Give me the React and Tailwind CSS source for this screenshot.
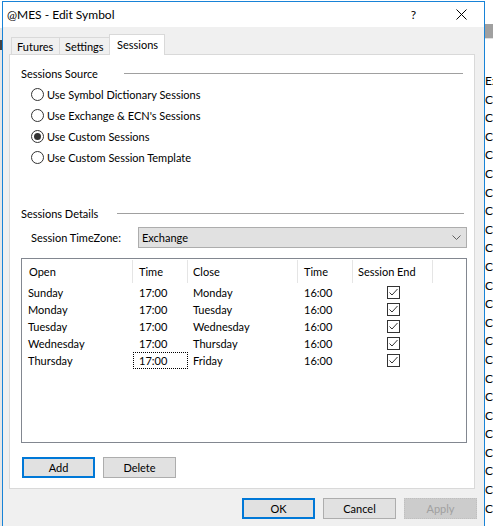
const font = { fontFamily: 'Lato, "Liberation Sans", sans-serif' };

const sideRows = ['Ex', 'CM', 'CM', 'CM', 'CM', 'CM', 'CM', 'CE', 'CL', 'CM', 'CM', 'CM', 'CO', 'CM', 'CM', 'CE', 'CM', 'CM', 'CM', 'CM', 'CL', 'CE', 'CE', 'CL'];

const sessions = [
  ['Sunday', '17:00', 'Monday', '16:00'],
  ['Monday', '17:00', 'Tuesday', '16:00'],
  ['Tuesday', '17:00', 'Wednesday', '16:00'],
  ['Wednesday', '17:00', 'Thursday', '16:00'],
  ['Thursday', '17:00', 'Friday', '16:00'],
];

const sources = [
  ['Use Symbol Dictionary Sessions', false],
  ["Use Exchange & ECN's Sessions", false],
  ['Use Custom Sessions', true],
  ['Use Custom Session Template', false],
];

function Radio({ checked, label }) {
  return (
    <div className="flex h-[21px] items-center pl-[21px]">
      <div className="flex h-[13px] w-[13px] items-center justify-center rounded-full border border-[#333333] bg-white">
        {checked && <div className="h-[7px] w-[7px] rounded-full bg-[#333333]" />}
      </div>
      <span className="ml-[3px]">{label}</span>
    </div>
  );
}

function Check() {
  return (
    <div className="ml-[34px] h-[13px] w-[13px] border border-[#333333] bg-white">
      <svg width="11" height="11" viewBox="0 0 11 11">
        <polyline points="1.5,5.5 4,8 9.5,2" fill="none" stroke="#333333" strokeWidth="1" />
      </svg>
    </div>
  );
}

function Button({ children, focused, disabled }) {
  return (
    <div
      className={
        'flex h-[21px] w-[73px] items-center justify-center ' +
        (focused
          ? 'border-2 border-[#0078d7] bg-[#e1e1e1]'
          : disabled
          ? 'border border-dotted border-[#bfbfbf] bg-[#cccccc] text-[#a0a0a0]'
          : 'border border-[#adadad] bg-[#e1e1e1]')
      }
    >
      {children}
    </div>
  );
}

function GroupTitle({ title, width, mr }) {
  return (
    <div className="flex h-[15px] items-center">
      <div className="pl-[11px]" style={{ width }}>{title}</div>
      <div className="h-px flex-1 bg-[#a0a0a0]" style={{ marginRight: mr }} />
    </div>
  );
}

export default function App() {
  return (
    <div className="flex h-[526px] w-[493px] overflow-hidden bg-white text-[11px] leading-[15px] text-black" style={font}>
      <div className="flex w-[2px] flex-col">
        <div className="h-[28px] bg-white" />
        <div className="h-[12px] bg-[#e6e6e6]" />
        <div className="h-[10px] bg-[#444444]" />
        <div className="flex-1 bg-[#e6e6e6]" />
      </div>

      <div className="mt-px flex w-[483px] flex-col border border-b-0 border-[#1883d7] bg-[#f0f0f0]">
        <div className="flex h-[25px] items-center bg-white pl-[4px] text-[12px]">
          <span>@MES - Edit Symbol</span>
          <span className="ml-auto mr-[40px] text-[12px]">?</span>
          <svg width="11" height="11" viewBox="0 0 11 11" className="mr-[17px]">
            <path d="M0.5 0.5 L10.5 10.5 M10.5 0.5 L0.5 10.5" stroke="#000" strokeWidth="1" />
          </svg>
        </div>

        <div className="ml-[8px] mt-[7px] flex h-[20px] items-end">
          <div className="flex h-[17px] w-[48px] items-center border-l border-t border-[#d9d9d9] pl-[5px]">Futures</div>
          <div className="flex h-[17px] w-[50px] items-center border-l border-t border-[#d9d9d9] pl-[5px]">Settings</div>
          <div className="relative z-10 -mb-px flex h-[21px] w-[56px] items-start border-l border-r border-t border-[#d9d9d9] bg-white pl-[7px] pt-[2px]">Sessions</div>
        </div>

        <div className="ml-[6px] flex h-[435px] w-[466px] flex-col border border-[#d9d9d9] bg-white pt-[11px]">
          <GroupTitle title="Sessions Source" width={114} mr={11} />
          <div className="mt-[3px]">
            {sources.map(([label, checked]) => (
              <Radio key={label} label={label} checked={checked} />
            ))}
          </div>

          <div className="mt-[38px]">
            <GroupTitle title="Sessions Details" width={107} mr={10} />
          </div>

          <div className="mt-[6px] flex h-[21px] items-center">
            <div className="w-[128px] pl-[21px]">Session TimeZone:</div>
            <div className="flex h-[21px] w-[329px] items-center border border-[#adadad] bg-[#e1e1e1] pl-[3px]">
              <span>Exchange</span>
              <svg width="9" height="5" viewBox="0 0 9 5" className="ml-auto mr-[5px]">
                <polyline points="0.5,0.5 4.5,4.5 8.5,0.5" fill="none" stroke="#606060" strokeWidth="1" />
              </svg>
            </div>
          </div>

          <div className="ml-[11px] mt-[10px] flex h-[185px] w-[446px] flex-col border border-[#828790] bg-white">
            <div className="flex h-[25px]">
              {[
                ['Open', 111, 7],
                ['Time', 55, 6],
                ['Close', 110, 5],
                ['Time', 55, 6],
                ['Session End', 80, 5],
              ].map(([h, w, p], i) => (
                <div key={i} className="flex h-[25px] items-center py-px" style={{ width: w }}>
                  <div className="flex h-full flex-1 items-center border-r border-[#e5e5e5]" style={{ paddingLeft: p }}>
                    {h}
                  </div>
                </div>
              ))}
            </div>
            {sessions.map(([o, t1, c, t2], i) => (
              <div key={o} className="flex h-[17px] items-center">
                <div className="w-[111px] pl-[6px]">{o}</div>
                {i === 4 ? (
                  <div className="flex h-[17px] w-[55px] items-center border border-dotted border-black pl-[5px]">{t1}</div>
                ) : (
                  <div className="w-[55px] pl-[6px]">{t1}</div>
                )}
                <div className="w-[110px] pl-[5px]">{c}</div>
                <div className="w-[55px] pl-[6px]">{t2}</div>
                <div className="w-[80px]">
                  <Check />
                </div>
              </div>
            ))}
          </div>

          <div className="ml-[12px] mt-[14px] flex gap-[8px]">
            <Button focused>Add</Button>
            <Button>Delete</Button>
          </div>
        </div>

        <div className="mt-[9px] flex justify-end gap-[8px] pr-[7px]">
          <Button focused>OK</Button>
          <Button>Cancel</Button>
          <Button disabled>Apply</Button>
        </div>
      </div>

      <div className="flex flex-1 flex-col overflow-hidden text-[12px]">
        <div className="h-[24px] shrink-0 bg-white" />
        <div className="h-[14px] shrink-0 bg-[#a0a0a0]" />
        <div className="h-[34px] shrink-0 border-t border-[#e0e0e0]" />
        {sideRows.map((r, i) => (
          <div key={i} className="h-[18.6px] shrink-0 whitespace-nowrap leading-[18px]">{r}</div>
        ))}
      </div>
    </div>
  );
}
